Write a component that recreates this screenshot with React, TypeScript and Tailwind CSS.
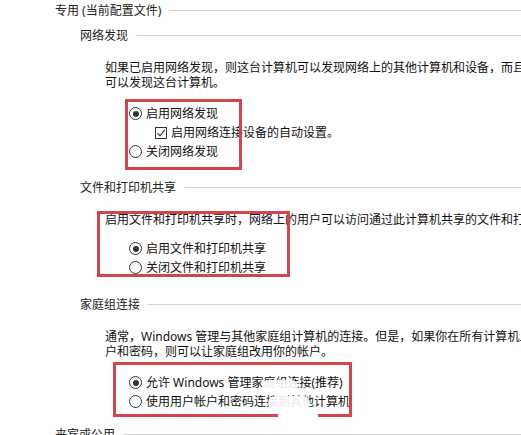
import React from "react";

const font = { fontFamily: '"Noto Sans", "Noto Sans CJK SC", sans-serif' };

function Radio({ checked }: { checked?: boolean }) {
  return (
    <span className="flex h-[13px] w-[13px] shrink-0 items-center justify-center rounded-full border border-[#333]">
      {checked && <span className="h-1.5 w-1.5 rounded-full bg-[#333]" />}
    </span>
  );
}

function Check() {
  return (
    <span className="flex h-3 w-3 shrink-0 items-center justify-center border border-[#333]">
      <svg width="10" height="10" viewBox="0 0 10 10" fill="none">
        <path d="M1.5 5.2 L4 7.8 L8.8 1.8" stroke="#333" strokeWidth="1.1" />
      </svg>
    </span>
  );
}

function Heading({ text, indent }: { text: string; indent: string }) {
  return (
    <div className={`flex h-5 items-center gap-2 ${indent}`}>
      <span className="shrink-0 text-[#222]">{text}</span>
      <div className="flex-1 border-t border-[#d2d2d2]" />
    </div>
  );
}

function Option({ label, checked, pad = "pl-[129px]" }: { label: string; checked?: boolean; pad?: string }) {
  return (
    <div className={`flex h-[19px] items-center gap-[4px] ${pad}`}>
      <Radio checked={checked} />
      <span>{label}</span>
    </div>
  );
}

export default function App() {
  return (
    <div
      className="relative h-[435px] w-[521px] overflow-hidden whitespace-nowrap bg-white text-[12px] leading-[15px] text-[#111]"
      style={font}
    >
      <Heading text="专用 (当前配置文件)" indent="pl-[55px]" />

      <div className="mt-[5px]">
        <Heading text="网络发现" indent="pl-[80px]" />
      </div>
      <div className="mt-[15px] pl-[105px]">
        <div>如果已启用网络发现，则这台计算机可以发现网络上的其他计算机和设备，而且其他网络计算机也</div>
        <div>可以发现这台计算机。</div>
      </div>
      <div className="mt-[14px]">
        <Option label="启用网络发现" checked />
        <div className="flex h-[19px] items-center gap-[4px] pl-[155px]">
          <Check />
          <span>启用网络连接设备的自动设置。</span>
        </div>
        <Option label="关闭网络发现" />
      </div>

      <div className="mt-[16px]">
        <Heading text="文件和打印机共享" indent="pl-[80px]" />
      </div>
      <div className="mt-[15px] pl-[105px]">
        <div>启用文件和打印机共享时，网络上的用户可以访问通过此计算机共享的文件和打印机。</div>
      </div>
      <div className="mt-[12px]">
        <Option label="启用文件和打印机共享" checked />
        <Option label="关闭文件和打印机共享" />
      </div>

      <div className="mt-[17px]">
        <Heading text="家庭组连接" indent="pl-[80px]" />
      </div>
      <div className="mt-[15px] pl-[105px]">
        <div>通常，Windows 管理与其他家庭组计算机的连接。但是，如果你在所有计算机上都有相同的用户帐</div>
        <div>户和密码，则可以让家庭组改用你的帐户。</div>
      </div>
      <div className="mt-[14px]">
        <Option label="允许 Windows 管理家庭组连接(推荐)" checked />
        <Option label="使用用户帐户和密码连接到其他计算机" />
      </div>

      <div className="mt-[13px]">
        <Heading text="来宾或公用" indent="pl-[55px]" />
      </div>

      {/* red highlight boxes */}
      <div className="absolute left-[125px] top-[99px] h-[71px] w-[117px] border-[3px] border-[#d5444c]" />
      <div className="absolute left-[97px] top-[211px] h-[66px] w-[193px] border-[3px] border-[#d5444c]" />
      <div className="absolute left-[113px] top-[362px] h-[55px] w-[239px] border-[3px] border-[#d5444c]" />

      {/* watermark smudge */}
      <div className="absolute left-[262px] top-[380px] h-[12px] w-[36px] rounded-full bg-white/90" />
      <div className="absolute left-[268px] top-[396px] h-[14px] w-[42px] rounded-full bg-white/90" />
      <div className="absolute left-[278px] top-[408px] h-[16px] w-[40px] rounded-full bg-white" />
      <div className="absolute left-[352px] top-[370px] h-[40px] w-[10px] bg-white" />
    </div>
  );
}
